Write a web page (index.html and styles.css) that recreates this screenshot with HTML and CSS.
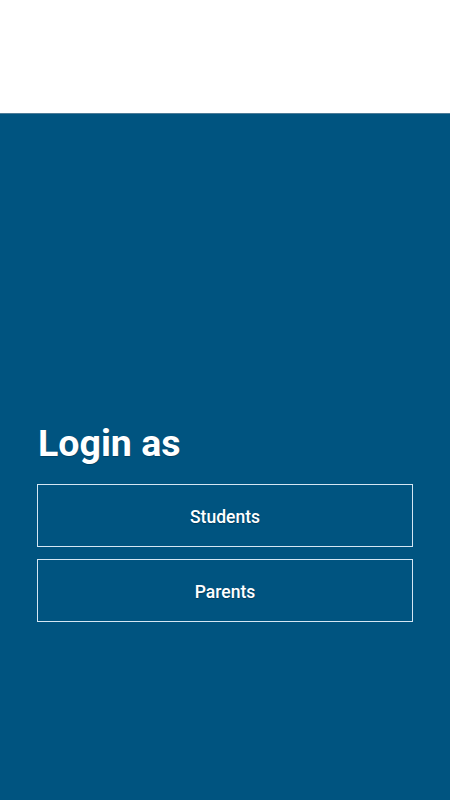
FILE: index.html
```html
<!DOCTYPE html>
<html lang="en">
<head>
    <meta charset="UTF-8">
    <meta name="viewport" content="width=device-width, initial-scale=1.0">
    <title>Login</title>
    <link rel="stylesheet" href="styles.css">
</head>
<body>
    <header class="top-bar"></header>

    <main class="login-panel">
        <h1 class="login-title">Login as</h1>
        <div class="login-options">
            <button type="button" class="login-btn">Students</button>
            <button type="button" class="login-btn">Parents</button>
        </div>
    </main>
</body>
</html>
```

FILE: styles.css
```css
/* Login screen */
html, body {
    height: 100%;
}

body {
    margin: 0;
    padding: 0;
    font-family: Roboto, "Liberation Sans", Arial, sans-serif;
    background-color: #ffffff;
    display: flex;
    flex-direction: column;
}

.top-bar {
    height: 113px;
    background-color: #ffffff;
    flex-shrink: 0;
}

.login-panel {
    flex: 1;
    background-color: #005480;
    box-shadow: inset 0 1px 0 #4d7c98;
    padding: 308px 37px 0;
}

.login-title {
    margin: 0 0 19px;
    padding-left: 1px;
    font-size: 37.5px;
    font-weight: 700;
    line-height: 44px;
    color: #ffffff;
    text-shadow: 0 1px 1px rgba(0, 0, 0, 0.25);
}

.login-options {
    display: flex;
    flex-direction: column;
    gap: 12px;
}

.login-btn {
    width: 100%;
    height: 63px;
    margin: 0;
    padding: 3px 0 0;
    background-color: transparent;
    border: 1px solid #d4e6f3;
    color: #ffffff;
    font-family: Roboto, "Liberation Sans", Arial, sans-serif;
    font-size: 17.5px;
    font-weight: 500;
    text-shadow: 0 1px 1px rgba(0, 0, 0, 0.3);
    cursor: pointer;
}
```
